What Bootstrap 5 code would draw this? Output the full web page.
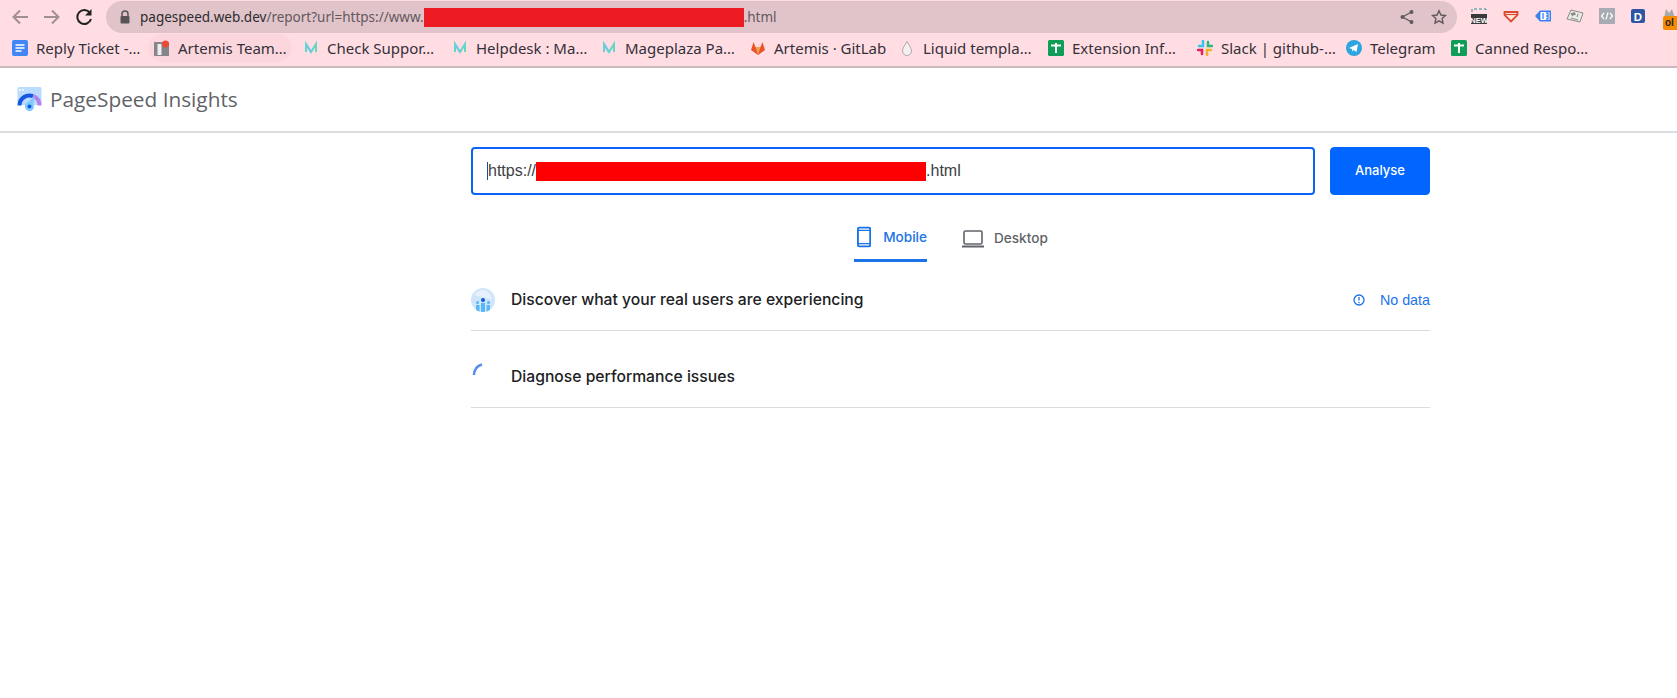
<!doctype html>
<html lang="en"><head><meta charset="utf-8"><title>PageSpeed Insights</title>
<link href="https://cdn.jsdelivr.net/npm/bootstrap@5.3.0/dist/css/bootstrap.min.css" rel="stylesheet">
<style>
html,body{height:698px;overflow:hidden;background:#fff}
body{font-family:"Inter",sans-serif}
.chrome-bar{background:#ffdde3;height:68px;border-bottom:2px solid #cdb8bf;font-family:"Noto Sans",sans-serif;overflow:hidden}
.tool-row{height:33px;padding-top:1px}
.nav-ic{width:32px;height:32px;flex:none}
.omni{margin-left:6px;width:1351px;height:32px;background:#e1c4c9;border-radius:16px;padding:0 10px 0 13px;font-size:13.5px;color:#63595d;flex:none;white-space:nowrap}
.omni b{font-weight:400;color:#2b2b30}
.omni-txt{margin-left:1px}
.redact{display:inline-block;background:#ed1c24;width:320px;height:19px}
.ext-row{margin-left:14px;gap:16px;flex:none;margin-top:-2px}
.ext-ic{width:16px;height:16px;flex:none;overflow:visible}
.mark-row{height:30px;padding-left:6px;gap:5px;font-size:15px;color:#33303a;white-space:nowrap}
.mark-item{display:flex;align-items:center;gap:8px;padding:0 6px;height:28px;border-radius:14px;flex:none}
.mark-item.hov{background:#fbd7dd}
.mark-item svg{width:16px;height:16px;flex:none}
.mark-w{width:108px}
.mark-first{width:101px}
.mark-tele{width:64px}
.brand-bar{height:65px;border-bottom:2px solid #dadce0;padding-left:17px}
.brand-txt{font-size:20.8px;color:#5f6368;margin-left:8px;font-family:"Open Sans",sans-serif}
.main-col{margin-left:471px;width:959px}
.url-box{width:844px;height:48px;border:2px solid #0b63f6;border-radius:4px;padding:0 14px;font:16px "Liberation Sans",sans-serif;color:#3c4043}
.caret-mark{width:1px;height:18px;background:#174ea6;flex:none}
.redact-b{background:#f00;width:390px;height:19px;display:block;flex:none}
.go-btn{width:100px;height:48px;margin-left:15px;background:#06f;border-color:#06f;border-radius:4px;font-size:13px;font-weight:500;padding:0}
.tab-row{margin-top:19px;height:48px;padding-left:383px;gap:35px}
.tab-i{height:48px;display:flex;align-items:center;gap:10px;font-size:13.6px;font-weight:500;color:#5f6368;padding-top:1px}
.tab-i.on{color:#1a73e8;width:73px;padding-left:3px;border-bottom:3px solid #1a73e8;gap:12px}
.sec-row{height:69px;border-bottom:1px solid #dadce0;font-size:15.7px;font-weight:500;color:#202124;padding-top:8px}
.sec-row + .sec-row{height:77px;padding-top:16px}
.sec-ic{width:24px;height:24px;margin-right:16px;flex:none}
.sec-ic-top{margin-top:-8px}
.nodata{font:14.3px "Liberation Sans",sans-serif;color:#1a73e8;gap:15px}
</style></head><body>
<div class="chrome-bar">
 <div class="tool-row d-flex align-items-center">
  <div class="d-flex align-items-center">
   <svg class="nav-ic ms-1" viewBox="0 0 32 32"><path d="M24 16H10M16 9.500l-6.500 6.500 6.500 6.500" fill="none" stroke="#a08f95" stroke-width="2"/></svg>
   <svg class="nav-ic" viewBox="0 0 32 32"><path d="M8 16h14M16 9.500l6.500 6.500-6.500 6.500" fill="none" stroke="#a08f95" stroke-width="2"/></svg>
   <svg class="nav-ic" viewBox="0 0 32 32"><path d="M22 12a7 7 0 1 0 1 6" fill="none" stroke="#222" stroke-width="2"/><path d="M23.500 8v6.500H17z" fill="#222"/></svg>
  </div>
  <div class="omni d-flex align-items-center">
   <svg width="12" height="14" viewBox="0 0 12 14" class="me-2 flex-none"><path d="M3 6V4a3 3 0 0 1 6 0v2" fill="none" stroke="#5a5458" stroke-width="1.500"/><rect x="1.500" y="6" width="9" height="7.500" rx="1" fill="#5a5458"/></svg>
   <span class="omni-txt"><b>pagespeed.web.dev</b>/report?url=https://www.</span><span class="redact"></span><span>.html</span>
   <span class="ms-auto d-flex align-items-center gap-3">
    <svg width="16" height="16" viewBox="0 0 16 16"><path d="M12.500 3 3.500 8l9 5" fill="none" stroke="#5f5a5c" stroke-width="1.300"/><circle cx="12.500" cy="3" r="2" fill="#5f5a5c"/><circle cx="3.500" cy="8" r="2" fill="#5f5a5c"/><circle cx="12.500" cy="13" r="2" fill="#5f5a5c"/></svg>
    <svg width="16" height="16" viewBox="0 0 16 16"><path d="m8 1.800 1.900 4.200 4.600.5-3.400 3.100.9 4.500L8 11.800l-4 2.300.9-4.500L1.500 6.500 6.100 6z" fill="none" stroke="#5f5a5c" stroke-width="1.400"/></svg>
   </span>
  </div>
  <div class="ext-row d-flex align-items-center">
   <svg class="ext-ic" viewBox="0 0 16 16"><path d="M1 4V1h14v3" stroke="#2a8f98" stroke-dasharray="3 2" fill="none"/><rect y="6" width="16" height="10" fill="#3a3a3a"/><text x="8" y="14.500" text-anchor="middle" font-family="Liberation Sans" font-size="7.500" font-weight="700" fill="#fff">NEW</text></svg>
   <svg class="ext-ic" viewBox="0 0 16 16"><path d="M1.500 4h13v3L8 13.500 1.500 7z" fill="#ffe7e2" stroke="#dc4a30" stroke-width="1.800"/><path d="M2 6.500h12" stroke="#dc4a30" stroke-width="1.200"/></svg>
   <svg class="ext-ic" viewBox="0 0 16 16"><path d="M5 2.500h11v11H5L0 8z" fill="#3b82f0"/><rect x="5.500" y="4" width="9" height="8" fill="#fff"/><path d="M8 5v6M11 5h2v6h-2M11 8h2" stroke="#3b82f0" stroke-width="1.300" fill="none"/></svg>
   <svg class="ext-ic" viewBox="0 0 16 16"><path d="m4 2 12 3-3 9-13-3z" fill="#e9e9e6" stroke="#8a8a86"/><path d="m3.500 5.500 4-1.500 1.500 2.500-4 1.500z" fill="#8a8a86"/><path d="m4 10 7 2M11 6l-1 3" stroke="#8a8a86"/></svg>
   <svg class="ext-ic" viewBox="0 0 16 16"><rect width="16" height="16" fill="#a7acb4"/><path d="M5 5 2.500 8 5 11M11 5l2.500 3-2.500 3M9 4.500l-2 7" stroke="#fff" stroke-width="1.200" fill="none"/></svg>
   <svg class="ext-ic" viewBox="0 0 16 16"><rect width="14" height="14" y="1" rx="2" fill="#2f55a4"/><text x="7" y="12.500" text-anchor="middle" font-family="Liberation Sans" font-size="11.500" font-weight="700" fill="#fff">D</text></svg>
   <svg class="ext-ic" viewBox="0 0 16 16"><path d="M1 10 3 1l3 4 3-4 3 9z" fill="#a9a9a9"/><rect y="8" width="16" height="14" rx="2" fill="#f68a00"/><text x="2" y="18" font-family="Liberation Sans" font-size="10" font-weight="700" fill="#222">ol</text></svg>
  </div>
 </div>
 <div class="mark-row d-flex align-items-center">
  <div class="mark-item"><svg viewBox="0 0 16 16"><rect width="16" height="16" rx="2" fill="#4285f4"/><path d="M3.500 5h9M3.500 8h9M3.500 11h6" stroke="#fff" stroke-width="1.500"/></svg><span class="mark-first">Reply Ticket -…</span></div>
  <div class="mark-item hov"><svg viewBox="0 0 16 16"><rect y="2" width="15" height="14" fill="#85858c"/><rect x="3.500" y="4" width="4" height="11" fill="#eee"/><circle cx="11.500" cy="4" r="3.500" fill="#ea4b35"/></svg><span class="mark-w">Artemis Team…</span></div>
  <div class="mark-item"><svg viewBox="0 0 16 16"><path d="M3 12V4l5 8 5-8v8" fill="none" stroke="#62d8c0" stroke-width="2"/><path d="M3 4l5 8" stroke="#70c8f0" stroke-width="2"/></svg><span class="mark-w">Check Suppor…</span></div>
  <div class="mark-item"><svg viewBox="0 0 16 16"><path d="M3 12V4l5 8 5-8v8" fill="none" stroke="#62d8c0" stroke-width="2"/><path d="M3 4l5 8" stroke="#70c8f0" stroke-width="2"/></svg><span class="mark-w">Helpdesk : Ma…</span></div>
  <div class="mark-item"><svg viewBox="0 0 16 16"><path d="M3 12V4l5 8 5-8v8" fill="none" stroke="#62d8c0" stroke-width="2"/><path d="M3 4l5 8" stroke="#70c8f0" stroke-width="2"/></svg><span class="mark-w">Mageplaza Pa…</span></div>
  <div class="mark-item"><svg viewBox="0 0 16 16"><path d="M8 15 1 10l1-3 1.500-5L5.500 7h5L12.500 2 14 7l1 3z" fill="#e8532b"/><path d="M8 15 5.500 7h5z" fill="#f5a04a"/></svg><span class="mark-w">Artemis · GitLab</span></div>
  <div class="mark-item"><svg viewBox="0 0 16 16"><path d="M8 1.500C6 5 3.500 8 3.500 11a4.500 4.500 0 0 0 9 0C12.500 8 10 5 8 1.500z" fill="#f7eef0" stroke="#aaa"/></svg><span class="mark-w">Liquid templa…</span></div>
  <div class="mark-item"><svg viewBox="0 0 16 16"><rect width="16" height="16" rx="1.500" fill="#0f9d58"/><path d="M3 5.500h10M8 3v10" stroke="#fff" stroke-width="2"/></svg><span class="mark-w">Extension Inf…</span></div>
  <div class="mark-item"><svg viewBox="0 0 16 16"><path d="M6 1v5H2" stroke="#36c5f0" stroke-width="2.500" fill="none" stroke-linecap="round"/><path d="M15 6h-4V2" stroke="#2eb67d" stroke-width="2.500" fill="none" stroke-linecap="round"/><path d="M10 15v-5h4" stroke="#ecb22e" stroke-width="2.500" fill="none" stroke-linecap="round"/><path d="M1 10h4v4" stroke="#e01e5a" stroke-width="2.500" fill="none" stroke-linecap="round"/></svg><span class="mark-w">Slack | github-…</span></div>
  <div class="mark-item"><svg viewBox="0 0 16 16"><circle cx="8" cy="8" r="8" fill="#2ca5e0"/><path d="M3 8l9-4-1.500 8-3-2-1.500 1.500V9z" fill="#fff"/></svg><span class="mark-tele">Telegram</span></div>
  <div class="mark-item"><svg viewBox="0 0 16 16"><rect width="16" height="16" rx="1.500" fill="#0f9d58"/><path d="M3 5.500h10M8 3v10" stroke="#fff" stroke-width="2"/></svg><span class="mark-w">Canned Respo…</span></div>
 </div>
</div>
<div class="brand-bar d-flex align-items-center">
 <svg width="25" height="25" viewBox="0 0 25 25"><rect x=".5" width="24" height="18" rx="1.500" fill="#bbdcff"/><circle cx="3" cy="3" r="1" fill="#fff"/><circle cx="6" cy="3" r="1" fill="#fff"/><path d="M2.500 18.500A10 10 0 0 1 16 9.100" fill="none" stroke="#1458e0" stroke-width="4"/><path d="M16 9.100A10 10 0 0 1 22.500 18.500" fill="none" stroke="#b57ff0" stroke-width="4"/><path d="m9 17 9-8-3 12z" fill="#7cc9ff"/><circle cx="12.500" cy="19.500" r="4.500" fill="#7cc9ff"/><circle cx="12.500" cy="19.500" r="2" fill="#1458e0"/></svg>
 <span class="brand-txt">PageSpeed Insights</span>
</div>
<div class="main-col">
 <div class="d-flex" style="margin-top:14px">
  <div class="url-box d-flex align-items-center"><span class="caret-mark"></span><span>https://</span><span class="redact-b"></span><span>.html</span></div>
  <button class="btn btn-primary go-btn" type="button">Analyse</button>
 </div>
 <div class="tab-row d-flex">
  <div class="tab-i on"><svg width="15" height="22" viewBox="0 0 15 22" class="flex-none"><rect x="1" y="1" width="13" height="20" rx="1.500" fill="none" stroke="#1a73e8" stroke-width="2"/><path d="M1 4h13M1 18h13" stroke="#1a73e8" stroke-width="1.500"/></svg>Mobile</div>
  <div class="tab-i"><svg width="22" height="18" viewBox="0 0 22 18" class="flex-none"><rect x="2" y="1" width="18" height="13" rx="1.500" fill="none" stroke="#5f6368" stroke-width="1.600"/><path d="M0 16.500h22" stroke="#5f6368" stroke-width="2"/></svg>Desktop</div>
 </div>
 <div class="sec-row d-flex align-items-center">
  <svg class="sec-ic" viewBox="0 0 24 24"><defs><clipPath id="discClip"><circle cx="12" cy="12" r="12"/></clipPath></defs><circle cx="12" cy="12" r="12" fill="#cfe5fb"/><path d="M3 7c3-4 8-6 11-5 4 2 7 6 7 10-5-3-13-3-18-5z" fill="#e6f1fd"/><g clip-path="url(#discClip)"><circle cx="12" cy="12" r="2" fill="#1458e0"/><circle cx="6.500" cy="14.500" r="1.500" fill="#58b8f5"/><circle cx="17.500" cy="14.500" r="1.500" fill="#58b8f5"/><rect x="10" y="15" width="4" height="9" fill="#58b8f5"/><rect x="5" y="17" width="3.500" height="7" fill="#58b8f5"/><rect x="15.500" y="17" width="3.500" height="7" fill="#58b8f5"/></g></svg>
  <span>Discover what your real users are experiencing</span>
  <span class="nodata ms-auto d-flex align-items-center"><svg width="12" height="12" viewBox="0 0 12 12"><circle cx="6" cy="6" r="5" fill="none" stroke="#1a73e8" stroke-width="1.300"/><path d="M6 3v3.500M6 8v1.200" stroke="#1a73e8" stroke-width="1.300"/></svg>No data</span>
 </div>
 <div class="sec-row d-flex align-items-center">
  <svg class="sec-ic sec-ic-top" viewBox="0 0 24 24"><path d="M3 14C3.200 8.500 6 4.800 11 3.500" fill="none" stroke="#5b8def" stroke-width="2.500"/></svg>
  <span>Diagnose performance issues</span>
 </div>
</div>
<script src="https://cdn.jsdelivr.net/npm/bootstrap@5.3.0/dist/js/bootstrap.bundle.min.js"></script>
</body></html>
